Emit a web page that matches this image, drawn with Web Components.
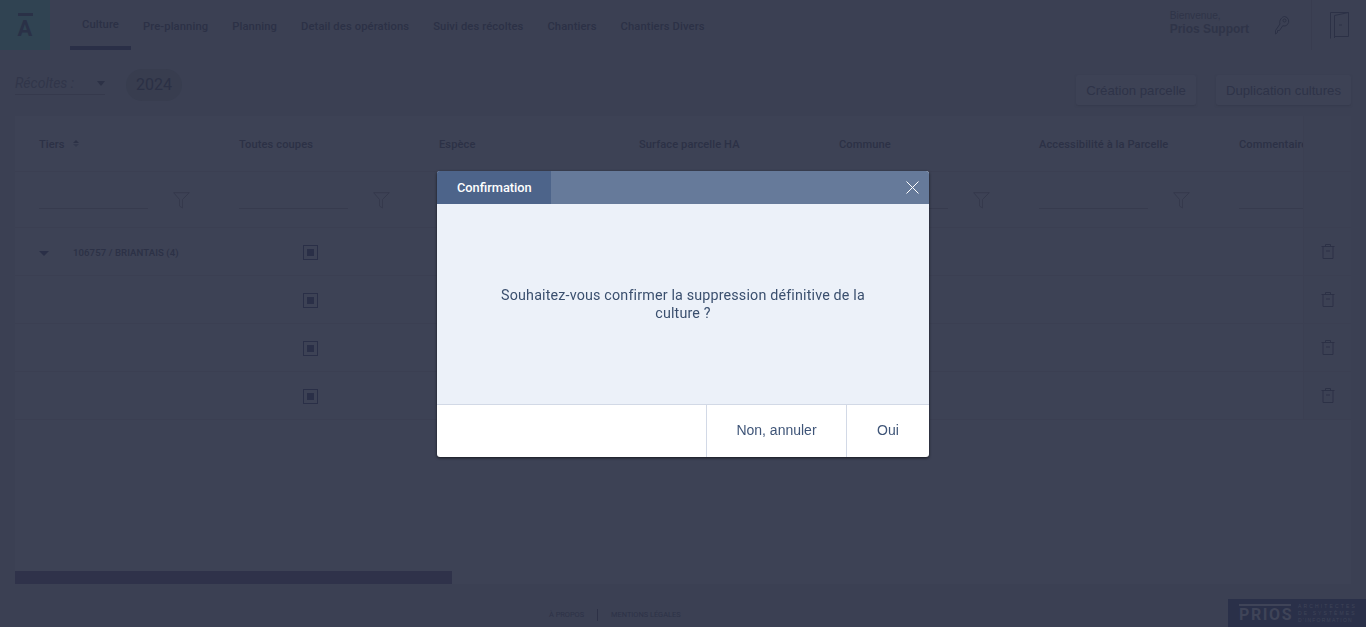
<!DOCTYPE html>
<html lang="fr"><head><meta charset="utf-8"><title>Culture</title>
<style>
html,body{margin:0;height:100%;overflow:hidden;background:#3b4053;font-family:"Roboto","Liberation Sans",sans-serif;color:#2c3146}
#page{height:627px;display:flex;flex-direction:column}
</style></head><body>
<div id="page">
<app-header></app-header>
<app-toolbar></app-toolbar>
<data-grid></data-grid>
<app-footer></app-footer>
</div>
<confirm-dialog heading="Confirmation">Souhaitez-vous confirmer la suppression définitive de la culture ?</confirm-dialog>
<script>
function def(name,html,setup){customElements.define(name,class extends HTMLElement{connectedCallback(){if(this.shadowRoot)return;const r=this.attachShadow({mode:'open'});r.innerHTML=html;if(setup)setup(r,this)}})}
const DIN='"Roboto","Liberation Sans",sans-serif', SANS='"Liberation Sans",Arial,sans-serif';
const INK='#2c3146';

def('nav-tab',`<style>
:host{display:flex;height:50px;padding:20.5px 12px 0;box-sizing:border-box;font:500 11.2px/1 ${DIN};letter-spacing:.115px;color:${INK};white-space:nowrap}
:host([active]){border-bottom:4px solid #2a2f47;padding-top:18.5px}
</style><slot></slot>`);

def('app-header',`<style>
:host{display:flex;height:50px;flex:none;background:#3b4053}
.logo{width:50px;height:50px;background:#304352;display:flex;flex-direction:column;align-items:center;flex:none}
.bar{width:15px;height:3px;background:#2a3147;margin-top:13px}
.a{font:700 22px/1 ${DIN};color:#2a3147;margin-top:2px}
nav{display:flex;margin-left:20px;flex:1}
.user{display:flex;flex-direction:column;margin-right:25px;font-family:${SANS};color:#2f3448;padding-top:9px}
.user small{font-size:10.2px;line-height:13px}.user b{font-size:12px;line-height:15px}
.key{margin:15px 21px 0 0;flex:none}
.exit{width:55px;border-left:1px solid #383c4f;display:flex;justify-content:center;padding-top:12px;box-sizing:border-box;flex:none}
svg{display:block}
</style>
<div class="logo"><div class="bar"></div><div class="a">A</div></div>
<nav><nav-tab active>Culture</nav-tab><nav-tab>Pre-planning</nav-tab><nav-tab>Planning</nav-tab><nav-tab>Detail des opérations</nav-tab><nav-tab>Suivi des récoltes</nav-tab><nav-tab>Chantiers</nav-tab><nav-tab>Chantiers Divers</nav-tab></nav>
<div class="user"><small>Bienvenue,</small><b>Prios Support</b></div>
<svg class="key" width="16" height="20" viewBox="0 0 16 20" fill="none" stroke="${INK}"><path d="M10.500 1.500a4.800 4.800 0 0 1 2.800 8.200c-1.300 1.300-3 1.600-4.500 1L5.500 15.500H3.500V17.500L1.500 19V15.500L6 9c-.7-1.800-.2-3.700 1-5.200 1-1.200 2.200-2.300 3.500-2.300z"/><circle cx="10.500" cy="5.500" r="1.500"/></svg>
<div class="exit"><svg width="19" height="27" viewBox="0 0 19 27" fill="none" stroke="${INK}"><path d="M.5 26.500V.5H18.500V24.500H5"/><path d="M4.500 26V3.500L18.500 .5"/><path d="M9 13h3"/></svg></div>`);

def('app-button',`<style>
:host{display:block;height:30px;box-sizing:border-box;padding:1px 10px 0;background:#3d4255;border-radius:2px;box-shadow:0 1px 2px #363a4c;font:13.2px/30px ${SANS};color:#2e3348;white-space:nowrap}
</style><slot></slot>`);

def('app-toolbar',`<style>
:host{display:flex;align-items:flex-start;height:66px;flex:none;padding:0 15px;box-sizing:border-box}
.sel{width:90px;height:45px;box-sizing:border-box;position:relative;border-bottom:1px solid #35394c;font:italic 14px/1 ${DIN};color:#31364a;padding-top:26px}
.sel i{position:absolute;right:0;top:31px;border:4px solid transparent;border-top:5px solid ${INK};border-bottom:0}
.year{margin:19px 0 0 21px;width:56px;height:32px;border-radius:16px;background:#383d4f;font:16px/32px ${DIN};color:#2b3045;text-align:center}
.sp{flex:1}
app-button{margin-top:25px}
app-button+app-button{margin-left:20px}
</style><div class="sel">Récoltes :<i></i></div><div class="year">2024</div><div class="sp"></div><app-button>Création parcelle</app-button><app-button>Duplication cultures</app-button>`);

const funnel=`<svg width="17" height="17" viewBox="0 0 17 17" fill="none" stroke="#35394c"><path d="M.7 .7H16.300L9.500 7.500V16L6.500 14V7.500Z"/></svg>`;
const trash=`<svg width="14" height="15" viewBox="0 0 14 15" fill="none" stroke="${INK}"><path d="M.5 2.500H13.500M4.500 2.500V.5H9.500V2.500M2 2.500V14.500H12V2.500M5 7H9"/></svg>`;
const cols=['Tiers','Toutes coupes','Espèce','Surface parcelle HA','Commune','Accessibilité à la Parcelle','Commentaire'];

def('grid-row',`<style>
:host{display:flex;height:48px;flex:none;box-sizing:border-box;border-bottom:1px solid #3b3f52}
.main{flex:1;display:flex;overflow:hidden}
.c{width:200px;flex:none;display:flex;align-items:center;box-sizing:border-box}
.c1{padding-left:24px;font:500 9.6px/1 ${DIN};color:${INK};letter-spacing:.08px;padding-top:3px}
.c2{padding-left:88px}
.tri{border:5px solid transparent;border-top:5px solid #2a2f47;border-bottom:0;margin-right:24px;margin-top:0}
.cb{width:15px;height:15px;border:1px solid #2a2f47;box-sizing:border-box;display:flex;align-items:center;justify-content:center;margin-top:1px}
.cb i{width:7px;height:7px;background:#2a2f47}
.end{width:48px;flex:none;display:flex;align-items:center;justify-content:center;background:#3c4154;border-left:1px solid #3b3f52;box-sizing:border-box}
</style><div class="main"><div class="c c1"><span id="g"></span></div><div class="c c2"><span class="cb"><i></i></span></div></div><div class="end">${trash}</div>`,
(r,h)=>{const g=r.getElementById('g');if(h.getAttribute('group')){g.style.display='flex';g.style.alignItems='center';g.innerHTML='<i class="tri"></i>'+h.getAttribute('group')}});

def('data-grid',`<style>
:host{display:flex;flex-direction:column;flex:none;height:468px;margin:0 15px;background:#3d4255}
.head,.filter{display:flex;box-sizing:border-box;flex:none;border-bottom:1px solid #3b3f52}
.head{height:56px}.filter{height:56px}
.main{flex:1;display:flex;overflow:hidden}
.c{width:200px;flex:none;box-sizing:border-box;padding-left:24px;position:relative}
.head .c{font:500 11.1px/1 ${DIN};letter-spacing:.1px;padding-top:23px;color:${INK};white-space:nowrap;display:flex}
.sort{display:inline-flex;flex-direction:column;gap:1px;margin:1px 0 0 8px}
.sort i{border:3px solid transparent;width:0;height:0}
.sort i:first-child{border-bottom:3.5px solid ${INK};border-top:0}
.sort i:last-child{border-top:3px solid #33384d;border-bottom:0}
.line{position:absolute;left:24px;width:109px;top:36px;height:1px;background:#373b4e}
.filter .c svg{position:absolute;left:158px;top:20px}
.end{width:48px;flex:none;background:#3c4154;border-left:1px solid #3b3f52;box-sizing:border-box}
.rows{display:flex;flex-direction:column;flex:1}
.scroll{height:13px;flex:none;background:#2f324a;width:437px}
</style>
<div class="head"><div class="main" id="h"></div><div class="end"></div></div>
<div class="filter"><div class="main" id="f"></div><div class="end"></div></div>
<div class="rows"><grid-row group="106757 / BRIANTAIS (4)"></grid-row><grid-row></grid-row><grid-row></grid-row><grid-row></grid-row></div>
<div class="scroll"></div>`,
r=>{r.getElementById('h').innerHTML=cols.map((c,i)=>`<div class="c">${c}${i?'':'<span class="sort"><i></i><i></i></span>'}</div>`).join('');
r.getElementById('f').innerHTML=cols.map((c,i)=>`<div class="c"><div class="line"></div>${i<6?funnel:''}</div>`).join('')});

def('app-footer',`<style>
:host{display:flex;flex:1;position:relative;padding:25px 0 0 549px;box-sizing:border-box;font:7.4px/1 ${DIN};color:#2d3247}
.links{display:flex;align-items:center;height:12px}
.sep{width:1px;height:12px;background:#2d3146;margin:0 13px}
.brand{position:absolute;right:0;bottom:0;width:138px;height:28px;background:#2a3049;display:flex;box-sizing:border-box;padding:4px 0 0 11px;color:#3f4458}
.p{width:52px;border-top:2px solid #3f4458;font:700 16px/18px ${DIN};letter-spacing:1.6px;height:20px;margin-top:1px;white-space:nowrap}
.t{font:5px/7px ${SANS};margin-left:7px;width:59px}
.t div{letter-spacing:1px;white-space:nowrap}
</style><div class="links"><span>À PROPOS</span><span class="sep"></span><span>MENTIONS LÉGALES</span></div>
<div class="brand"><div class="p">PRIOS</div><div class="t"><div style="letter-spacing:2.15px">ARCHITECTES</div><div style="letter-spacing:2.1px">DE SYSTÈMES</div><div style="letter-spacing:1.2px">D'INFORMATION</div></div></div>`);

def('confirm-dialog',`<style>
:host{position:fixed;inset:0;display:flex;align-items:center;justify-content:center;padding-top:1px;box-sizing:border-box}
.d{width:492px;height:286px;border-radius:3px;overflow:hidden;display:flex;flex-direction:column;box-shadow:0 1px 3px rgba(0,0,0,.65);background:#fff}
.top{height:33px;flex:none;background:#667a9a;display:flex;justify-content:space-between}
.tab{width:114px;background:#4d648a;color:#fff;font:500 12.8px/33px ${DIN};padding-left:20px;box-sizing:border-box}
.x{margin:10px 10px 0 0}
.msg{flex:1;background:#ecf1f9;border-bottom:1px solid #d2d9e6;display:flex;align-items:center;justify-content:center;text-align:center;font:14.3px/18px ${DIN};letter-spacing:.17px;color:#3a4f6e;padding:0 60px 1px;box-sizing:border-box}
.bt{height:52px;flex:none;display:flex;justify-content:flex-end;font:14px/51px ${SANS};color:#3f5578}
.bt span{border-left:1px solid #d2d9e6;text-align:center;box-sizing:border-box}
</style><div class="d"><div class="top"><div class="tab"></div><svg class="x" width="13" height="13" viewBox="0 0 13 13" stroke="#fff" fill="none"><path d="M.5 .5 12.500 12.500M12.500 .5 .5 12.500"/></svg></div>
<div class="msg"><div><slot></slot></div></div><div class="bt"><span style="width:140px">Non, annuler</span><span style="width:83px">Oui</span></div></div>`,
(r,h)=>{r.querySelector('.tab').textContent=h.getAttribute('heading')});
</script>
</body></html>
